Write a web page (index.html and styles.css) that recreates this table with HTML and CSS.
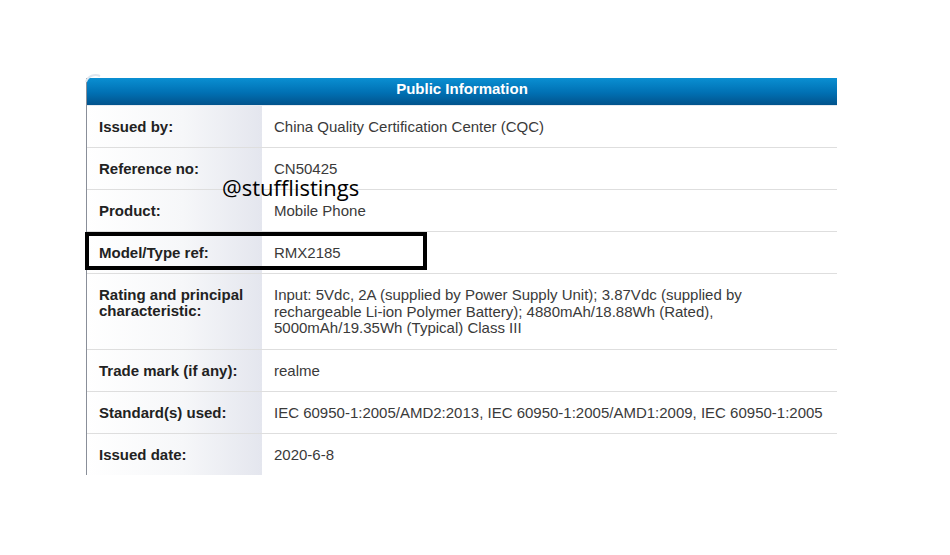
FILE: index.html
```html
<!DOCTYPE html>
<html>
<head>
<meta charset="utf-8">
<link rel="stylesheet" href="styles.css">
</head>
<body>
<div class="page">
  <div class="panel">
    <div class="head">Public Information</div>
    <svg class="corner" width="16" height="10" viewBox="0 0 16 10"><path d="M1 9 A10 10 0 0 1 15 3" fill="none" stroke="#dfe6ee" stroke-width="2"/></svg>
    <div class="row"><div class="lab">Issued by:</div><div class="val">China Quality Certification Center (CQC)</div></div>
    <div class="row"><div class="lab">Reference no:</div><div class="val">CN50425</div></div>
    <div class="row"><div class="lab">Product:</div><div class="val">Mobile Phone</div></div>
    <div class="row"><div class="lab">Model/Type ref:</div><div class="val">RMX2185</div></div>
    <div class="row"><div class="lab">Rating and principal characteristic:</div><div class="val multi">Input: 5Vdc, 2A (supplied by Power Supply Unit); 3.87Vdc (supplied by<br>rechargeable Li-ion Polymer Battery); 4880mAh/18.88Wh (Rated),<br>5000mAh/19.35Wh (Typical) Class III</div></div>
    <div class="row"><div class="lab">Trade mark (if any):</div><div class="val">realme</div></div>
    <div class="row"><div class="lab">Standard(s) used:</div><div class="val">IEC 60950-1:2005/AMD2:2013, IEC 60950-1:2005/AMD1:2009, IEC 60950-1:2005</div></div>
    <div class="row last"><div class="lab">Issued date:</div><div class="val">2020-6-8</div></div>
    <div class="highlight"></div>
    <div class="mark">@stufflistings</div>
  </div>
</div>
</body>
</html>
```
FILE: styles.css
```css
html, body {
  margin: 0;
  padding: 0;
  background: #fff;
}
.page {
  width: 950px;
  height: 555px;
  padding-top: 78px;
  padding-left: 86px;
  box-sizing: border-box;
}
.panel {
  position: relative;
  width: 750px;
  border-left: 1px solid #8a8f99;
  font-family: "Liberation Sans", Arial, sans-serif;
  font-size: 15px;
  color: #333;
}
.corner {
  position: absolute;
  left: -2px;
  top: -5px;
}
.head {
  height: 27px;
  line-height: 22px;
  background: linear-gradient(#0a8fd2, #0070b3 55%, #02538c);
  border-bottom: 1px solid #e6eaf0;
  color: #fff;
  font-weight: bold;
  text-align: center;
}
.row {
  display: flex;
  border-bottom: 1px solid #dedede;
  line-height: 16px;
}
.row.last {
  border-bottom: none;
}
.lab {
  width: 175px;
  flex: none;
  box-sizing: border-box;
  padding: 13px 8px 12px 12px;
  font-weight: bold;
  color: #222;
  background: linear-gradient(to right, #ffffff 0%, #f6f7f9 55%, #e4e6ee 100%);
}
.val {
  flex: 1;
  padding: 13px 8px 12px 12px;
  color: #3a3a3a;
  white-space: nowrap;
}
.val.multi {
  line-height: 16.67px;
}
.highlight {
  position: absolute;
  left: -2px;
  top: 154px;
  width: 342px;
  height: 38px;
  border: 4px solid #000;
  box-sizing: border-box;
}
.mark {
  position: absolute;
  left: 135px;
  top: 96px;
  font-family: "Open Sans", "Noto Sans", sans-serif;
  font-size: 22px;
  color: #000;
  line-height: 26px;
}
```
